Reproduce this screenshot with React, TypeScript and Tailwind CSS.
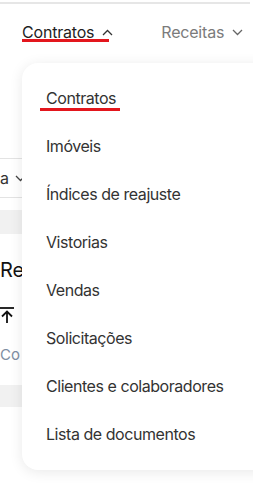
import React from 'react';

const menuItems = [
  'Contratos',
  'Imóveis',
  'Índices de reajuste',
  'Vistorias',
  'Vendas',
  'Solicitações',
  'Clientes e colaboradores',
  'Lista de documentos',
];

const ChevronUp = () => (
  <svg width="11" height="7" viewBox="0 0 11 7" fill="none" stroke="#333" strokeWidth="1.3">
    <path d="M1 6l4.5-4.5L10 6" />
  </svg>
);

const ChevronDown = ({ color = '#555' }: { color?: string }) => (
  <svg width="11" height="7" viewBox="0 0 11 7" fill="none" stroke={color} strokeWidth="1.3">
    <path d="M1 1l4.5 4.5L10 1" />
  </svg>
);

const App: React.FC = () => {
  return (
    <div className="relative w-[253px] h-[485px] overflow-hidden bg-white" style={{ fontFamily: 'Inter, "Noto Sans", sans-serif' }}>
      {/* top line */}
      <div className="mt-[2px] h-[2px] w-[250px] bg-[#e6e6e6]" />

      {/* nav */}
      <div className="flex items-center h-[56px] pl-[22px]">
        <div className="relative flex items-center gap-[8px]">
          <span className="text-[16px] text-[#1f1f1f] tracking-[-0.2px]">Contratos</span>
          <ChevronUp />
          <div className="absolute left-0 top-[19px] h-[3px] w-[87px] bg-[#e3161d]" />
        </div>
        <div className="ml-[48px] flex items-center gap-[8px]">
          <span className="text-[16px] text-[#7b7b7b] tracking-[-0.2px]">Receitas</span>
          <ChevronDown color="#666" />
        </div>
      </div>

      {/* page content behind the dropdown */}
      <div className="mt-[98px] border-t border-[#e3e3e3]" />
      <div className="flex items-center h-[38px] pl-0 gap-[6px]">
        <span className="text-[16px] text-[#333]">a</span>
        <ChevronDown color="#444" />
      </div>
      <div className="border-t border-[#e3e3e3]" />
      <div className="mt-[12px] h-[24px] bg-[#f1f1f1]" />
      <div className="mt-[24px] text-[20px] text-[#111] leading-[24px]">Re</div>
      <div className="mt-[25px] pl-0">
        <svg width="14" height="16" viewBox="0 0 14 16" fill="none" stroke="#111" strokeWidth="1.8">
          <path d="M0 1h14" />
          <path d="M7 16V5M2 9.5l5-5 5 5" />
        </svg>
      </div>
      <div className="mt-[21px] text-[15px] text-[#7e8ea3]">Co</div>
      <div className="mt-[18px] h-[22px] bg-[#f1f1f1]" />

      {/* dropdown */}
      <div className="absolute left-[22px] top-[63px] w-[260px] h-[407px] bg-white rounded-[16px] shadow-[0_2px_14px_rgba(0,0,0,0.09)] pt-[11px]">
        <ul className="flex flex-col">
          {menuItems.map((item, i) => (
            <li key={item} className="h-[48px] flex items-center pl-[24px]">
              <span className="relative text-[16px] text-[#333] tracking-[-0.45px]">
                {item}
                {i === 0 && <span className="absolute left-[-6px] right-[-4px] bottom-[-1px] h-[3px] bg-[#e3161d]" />}
              </span>
            </li>
          ))}
        </ul>
      </div>
    </div>
  );
};

export default App;
